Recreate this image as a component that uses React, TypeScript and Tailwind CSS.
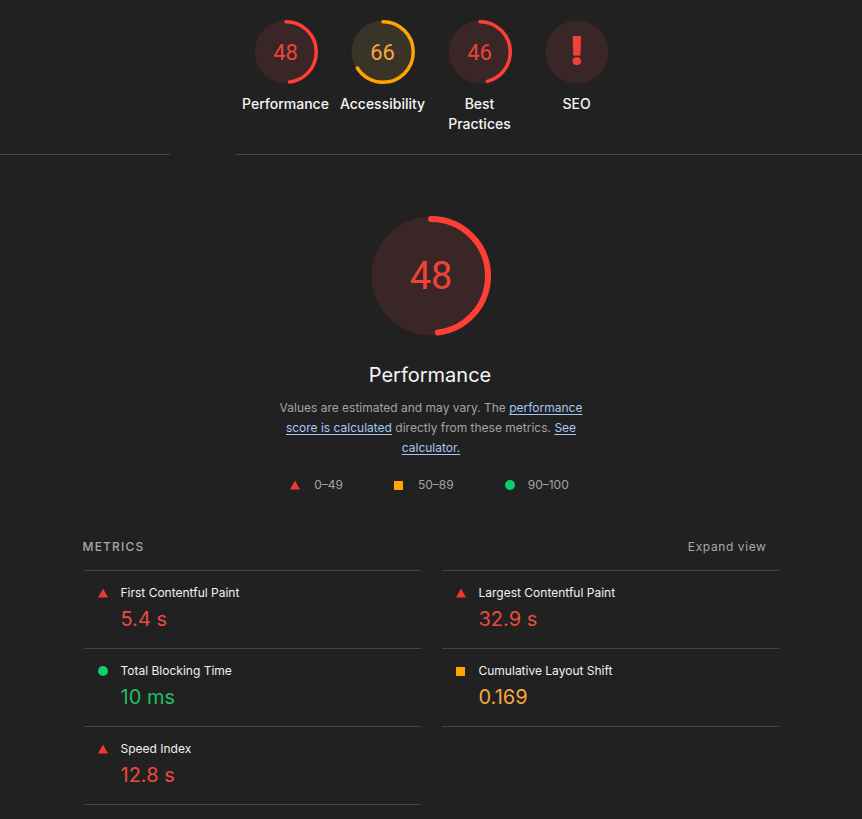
import React from "react";

const RED = "#ff3f36";
const ORANGE = "#ffa400";

function Gauge({
  size,
  stroke,
  score,
  color,
  textColor,
  fill,
  textClass,
}: {
  size: number;
  stroke: number;
  score: number | null;
  color: string;
  textColor: string;
  fill: string;
  textClass: string;
}) {
  const r = size / 2 - stroke / 2;
  const c = 2 * Math.PI * r;
  return (
    <div className="relative" style={{ width: size, height: size }}>
      <svg width={size} height={size} viewBox={`0 0 ${size} ${size}`} className="block">
        <circle cx={size / 2} cy={size / 2} r={size / 2 - 0.5} fill={fill} />
        {score !== null && (
          <circle
            cx={size / 2}
            cy={size / 2}
            r={r}
            fill="none"
            stroke={color}
            strokeWidth={stroke}
            strokeLinecap="round"
            strokeDasharray={`${(score / 100) * c} ${c}`}
            transform={`rotate(-90 ${size / 2} ${size / 2})`}
          />
        )}
      </svg>
      <div
        className={`absolute inset-0 flex items-center justify-center ${textClass}`}
        style={{ color: textColor }}
      >
        {score === null ? "!" : score}
      </div>
    </div>
  );
}

function Triangle() {
  return (
    <svg width="10" height="10" viewBox="0 0 10 10">
      <polygon points="5,0.5 10,9.5 0,9.5" fill="#f0392e" />
    </svg>
  );
}
function Square() {
  return <div className="w-[9px] h-[9px] bg-[#ffa400]" />;
}
function Dot() {
  return <div className="w-[10px] h-[10px] rounded-full bg-[#0cce6b]" />;
}

type Metric = { title: string; value: string; kind: "fail" | "avg" | "pass" };

function MetricRow({ m }: { m: Metric }) {
  const color =
    m.kind === "fail" ? "text-[#ec4a3f]" : m.kind === "avg" ? "text-[#f5a83a]" : "text-[#1fbf62]";
  return (
    <div className="h-[78px] border-t border-[#444444] pl-[14px] pt-[12px]">
      <div className="flex items-center h-[20px]">
        <div className="w-[10px] flex items-center justify-center">
          {m.kind === "fail" ? <Triangle /> : m.kind === "avg" ? <Square /> : <Dot />}
        </div>
        <div className="ml-[13px] text-[12px] text-[#f2f2f2] font-normal">{m.title}</div>
      </div>
      <div className={`ml-[23px] mt-[2px] text-[20px] leading-[28px] ${color}`}>{m.value}</div>
    </div>
  );
}

export default function App() {
  const left: Metric[] = [
    { title: "First Contentful Paint", value: "5.4 s", kind: "fail" },
    { title: "Total Blocking Time", value: "10 ms", kind: "pass" },
    { title: "Speed Index", value: "12.8 s", kind: "fail" },
  ];
  const right: Metric[] = [
    { title: "Largest Contentful Paint", value: "32.9 s", kind: "fail" },
    { title: "Cumulative Layout Shift", value: "0.169", kind: "avg" },
  ];
  const gauges = [
    { label: "Performance", score: 48, color: RED, text: "#ee4438", fill: "#3a2626" },
    { label: "Accessibility", score: 66, color: ORANGE, text: "#f5a83a", fill: "#3a3327" },
    { label: "Best Practices", score: 46, color: RED, text: "#ee4438", fill: "#3a2626" },
    { label: "SEO", score: null, color: RED, text: "#ee4438", fill: "#3a2626" },
  ];
  const link = "text-[#a7c7f2] underline underline-offset-2";
  return (
    <div className="min-h-[819px] w-full bg-[#212121] font-[Inter,sans-serif] text-[#f0f0f0]">
      {/* top gauges */}
      <div className="flex justify-center pt-[20px] pb-[20px]">
        {gauges.map((g) => (
          <div key={g.label} className="w-[97px] flex flex-col items-center">
            <Gauge
              size={64}
              stroke={3.5}
              score={g.score}
              color={g.color}
              textColor={g.text}
              fill={g.fill}
              textClass={
                g.score === null
                  ? "text-[40px] font-black leading-none pb-[2px]"
                  : "text-[22px] font-[Roboto,sans-serif]"
              }
            />
            <div className="mt-[10px] text-[14px] leading-[20px] font-medium text-center text-[#f5f5f5] w-[90px]">
              {g.label === "Best Practices" ? (
                <>
                  Best
                  <br />
                  Practices
                </>
              ) : (
                g.label
              )}
            </div>
          </div>
        ))}
      </div>
      {/* divider */}
      <div className="flex h-px">
        <div className="w-[170px] bg-[#474747]" />
        <div className="w-[66px]" />
        <div className="flex-1 bg-[#474747]" />
      </div>

      {/* big gauge */}
      <div className="flex flex-col items-center pt-[61px]">
        <Gauge
          size={120}
          stroke={6}
          score={48}
          color={RED}
          textColor="#ee4438"
          fill="#3a2626"
          textClass="text-[38px] font-[Roboto,sans-serif]"
        />
        <div className="mt-[25px] text-[20px] leading-[28px] text-[#f5f5f5] pr-[2px]">Performance</div>
        <div className="mt-[9px] flex flex-col items-center text-[12px] leading-[20px] text-[#a3a3a3]">
          <div>
            Values are estimated and may vary. The <a className={link}>performance</a>
          </div>
          <div>
            <a className={link}>score is calculated</a> directly from these metrics. <a className={link}>See</a>
          </div>
          <div>
            <a className={link}>calculator.</a>
          </div>
        </div>
        <div className="mt-[17px] flex items-center gap-[51px] text-[12px] leading-[20px] text-[#a3a3a3] pr-[3px]">
          <div className="flex items-center">
            <Triangle />
            <span className="ml-[14px]">0–49</span>
          </div>
          <div className="flex items-center">
            <Square />
            <span className="ml-[15px]">50–89</span>
          </div>
          <div className="flex items-center">
            <Dot />
            <span className="ml-[13px]">90–100</span>
          </div>
        </div>
      </div>

      {/* metrics */}
      <div className="mx-auto w-[695px] mt-[42px]">
        <div className="flex justify-between items-center h-[20px] pr-[12px]">
          <div className="text-[12px] tracking-[1.2px] text-[#a8a8a8] font-medium -ml-[1px]">METRICS</div>
          <div className="text-[12px] tracking-[0.6px] text-[#a8a8a8]">Expand view</div>
        </div>
        <div className="mt-[13px] grid grid-cols-2 gap-x-[21px] items-start">
          <div className="border-b border-[#444444]">
            {left.map((m) => (
              <MetricRow key={m.title} m={m} />
            ))}
          </div>
          <div className="border-b border-[#444444]">
            {right.map((m) => (
              <MetricRow key={m.title} m={m} />
            ))}
          </div>
        </div>
      </div>
    </div>
  );
}
